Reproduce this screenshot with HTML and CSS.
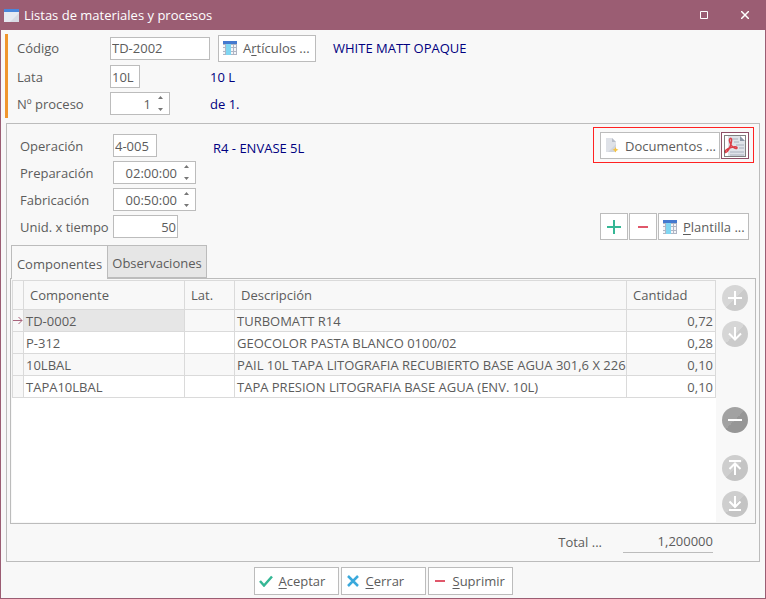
FILE: index.html
```html
<!DOCTYPE html>
<html lang="es">
<head>
<meta charset="utf-8">
<meta name="viewport" content="width=device-width, initial-scale=1">
<title>Listas de materiales y procesos</title>
<link rel="stylesheet" href="styles.css">
</head>
<body>
<svg class="defs" aria-hidden="true">
  <symbol id="grid" viewBox="0 0 14 14">
    <rect width="14" height="14" fill="#b9bfcb"/>
    <path d="M0 3h14v11H0z" fill="#aeb5c4"/>
    <path d="M0 4h2v2H0zM0 7h2v3H0zM0 11h2v2H0zM8 4h2v2H8zM8 7h2v3H8zM8 11h2v2H8zM11 4h2v2h-2zM11 7h2v3h-2zM11 11h2v2h-2z" fill="#f4f5f8"/>
    <path d="M3 3h5v11H3z" fill="#7fd6f2"/>
    <path d="M0 0h14v3H0z" fill="#4479cf"/>
  </symbol>
</svg>
<div class="window">
  <header class="titlebar">
    <svg class="app-icon" viewBox="0 0 15 13" aria-hidden="true"><path d="M0 0h15v13H0z" fill="#e6e9f2"/><path d="M6 13l9-9v9z" fill="#d8dbe5"/><path d="M0 0h15v3H0z" fill="#4a86dc"/></svg>
    <h1>Listas de materiales y procesos</h1>
    <button class="win-btn" aria-label="Maximizar"><svg width="8" height="8"><path d="M.5.5h7v7h-7z" fill="none" stroke="#fff"/></svg></button>
    <button class="win-btn" aria-label="Cerrar ventana"><svg width="8" height="8"><path d="M0 0l8 8M8 0L0 8" stroke="#fff" stroke-width="1.5"/></svg></button>
  </header>

  <main>
    <section class="head">
      <div class="row">
        <label for="codigo">Código</label>
        <input id="codigo" class="w-code" value="TD-2002">
        <button class="btn articles"><svg class="i14" aria-hidden="true"><use href="#grid"/></svg><span>A<u>r</u>tículos ...</span></button>
        <output class="info">WHITE MATT OPAQUE</output>
      </div>
      <div class="row">
        <label for="lata">Lata</label>
        <div class="cell"><input id="lata" class="w-can" value="10L"></div>
        <output class="info">10 L</output>
      </div>
      <div class="row">
        <label for="proceso">Nº proceso</label>
        <div class="cell"><div class="spin w-proc"><input id="proceso" value="1"><svg width="5" height="15" aria-hidden="true"><path d="M0 3l2.500-3L5 3zM0 12h5l-2.500 3z" fill="#777"/></svg></div></div>
        <output class="info">de 1.</output>
      </div>
    </section>

    <section class="panel">
      <div class="operation">
        <div class="fields">
          <div class="row"><label for="operacion">Operación</label><div class="cell"><input id="operacion" class="w-op" value="4-005"></div><output class="info low">R4 - ENVASE 5L</output></div>
          <div class="row"><label for="prep">Preparación</label><div class="spin w-time"><input id="prep" value="02:00:00"><svg width="5" height="15" aria-hidden="true"><path d="M0 3l2.500-3L5 3zM0 12h5l-2.500 3z" fill="#777"/></svg></div></div>
          <div class="row"><label for="fab">Fabricación</label><div class="spin w-time"><input id="fab" value="00:50:00"><svg width="5" height="15" aria-hidden="true"><path d="M0 3l2.500-3L5 3zM0 12h5l-2.500 3z" fill="#777"/></svg></div></div>
          <div class="row"><label for="unid">Unid. x tiempo</label><input id="unid" class="w-unit" value="50"></div>
        </div>
        <div class="tools">
          <div class="highlight">
            <button class="btn docs"><svg width="14" height="15" viewBox="0 0 14 15" aria-hidden="true"><path d="M1 0h6l4 4v10H1z" fill="#dfe2e8"/><path d="M7 0l4 4H7z" fill="#b9bec9"/><path d="M3 14l8-8v8z" fill="#d1d5dd"/><path d="M10.500 9l.9 1.900 2.100.9-2.100.9-.9 1.900-.9-1.900-2.100-.9 2.100-.9z" fill="#f7c33e"/></svg><span>Documentos ...</span></button>
            <button class="btn pdf" aria-label="PDF"><svg width="22" height="22" viewBox="0 0 22 22" aria-hidden="true"><path d="M4 1h12l5 5v15H4z" fill="#dfe3e9"/><path d="M16 1l5 5h-5z" fill="#8c96a6"/><path d="M8 4h6M10 7h5M12 10h8M15 13h5M6 17h14M6 20h14" stroke="#a8b0bd"/><path d="M6 3.500c1.500-1 2 1.500 1.200 4.500C6.300 12 3.500 18 1.500 17.500c-1.500-1.500 2-4 5.500-5 3-1 6.500-1 6 .5-1 1.500-4.500-.5-6.200-3.500C5.500 7 5 4.500 6 3.500z" fill="none" stroke="#dc3e48" stroke-width="1.500"/><path d="M.5.5h21v21H.5z" fill="none" stroke="#000" stroke-dasharray="1 1"/></svg></button>
          </div>
          <div class="toolbar">
            <button class="btn square" aria-label="Añadir"><svg width="14" height="14"><path d="M7 0v14M0 7h14" stroke="#35b795" stroke-width="2"/></svg></button>
            <button class="btn square" aria-label="Quitar"><svg width="10" height="2"><path d="M0 1h10" stroke="#e0576a" stroke-width="2"/></svg></button>
            <button class="btn template"><svg class="i14" aria-hidden="true"><use href="#grid"/></svg><span><u>P</u>lantilla ...</span></button>
          </div>
        </div>
      </div>

      <div class="tabs" role="tablist">
        <button class="tab active" role="tab" aria-selected="true">Componentes</button>
        <button class="tab" role="tab" aria-selected="false">Observaciones</button>
      </div>
      <div class="sheet">
        <div class="table-area">
          <table>
            <colgroup><col class="c-mark"><col class="c-comp"><col class="c-lat"><col><col class="c-qty"></colgroup>
            <thead><tr><th></th><th>Componente</th><th>Lat.</th><th>Descripción</th><th>Cantidad</th></tr></thead>
            <tbody>
              <tr><td class="mark"><svg width="10" height="9" aria-hidden="true"><path d="M0 4.500h9M5.500 1L9 4.500 5.500 8" fill="none" stroke="#a8647c"/></svg></td><td class="selected">TD-0002</td><td></td><td>TURBOMATT R14</td><td>0,72</td></tr>
              <tr><td class="mark"></td><td>P-312</td><td></td><td>GEOCOLOR PASTA BLANCO 0100/02</td><td>0,28</td></tr>
              <tr><td class="mark"></td><td>10LBAL</td><td></td><td>PAIL 10L TAPA LITOGRAFIA RECUBIERTO BASE AGUA 301,6 X 226</td><td>0,10</td></tr>
              <tr><td class="mark"></td><td>TAPA10LBAL</td><td></td><td>TAPA PRESION LITOGRAFIA BASE AGUA (ENV. 10L)</td><td>0,10</td></tr>
            </tbody>
          </table>
        </div>
        <div class="side">
          <button class="round light" aria-label="Añadir línea"><svg viewBox="0 0 26 26"><path d="M13 6v14M6 13h14"/></svg></button>
          <button class="round light" aria-label="Bajar"><svg viewBox="0 0 26 26"><path d="M13 6v13M7 12.500l6 6 6-6"/></svg></button>
          <button class="round dark" aria-label="Eliminar línea"><svg viewBox="0 0 26 26"><path d="M6 13h14"/></svg></button>
          <button class="round" aria-label="Ir al principio"><svg viewBox="0 0 26 26"><path d="M7 6h12M13 20V9M7.500 14L13 8.500l5.500 5.500"/></svg></button>
          <button class="round" aria-label="Ir al final"><svg viewBox="0 0 26 26"><path d="M7 19h12M13 5v11M7.500 10.500L13 16l5.500-5.500"/></svg></button>
        </div>
      </div>
      <div class="total"><label for="total">Total ...</label><input id="total" value="1,200000" readonly></div>
    </section>

    <footer>
      <button class="btn action"><svg width="14" height="12"><path d="M1 6l4 4.500L13 1.500" fill="none" stroke="#35b795" stroke-width="2.500"/></svg><span><u>A</u>ceptar</span></button>
      <button class="btn action"><svg width="14" height="12"><path d="M2 1l10 10M12 1L2 11" stroke="#3aa9dc" stroke-width="2.500"/></svg><span><u>C</u>errar</span></button>
      <button class="btn action"><svg width="14" height="12"><path d="M2 6h10" stroke="#e0576a" stroke-width="2"/></svg><span><u>S</u>uprimir</span></button>
    </footer>
  </main>
</div>
</body>
</html>
```
FILE: styles.css
```css
* { box-sizing: border-box; }
body { margin: 0; font: 13px/18px "Open Sans", "Noto Sans", sans-serif; color: #5c5c5c; }
button, input { font: inherit; color: inherit; }
button { padding: 0; border: 0; background: none; }
svg { display: block; flex: none; }
.defs { position: absolute; width: 0; height: 0; }

.window { min-height: 100vh; display: flex; flex-direction: column; border: 1px solid #9b5d73; border-top: 0; background: #f8f8f8; }
.titlebar { display: flex; align-items: center; height: 30px; padding-left: 3px; background: #9b5d73; color: #fff; }
.app-icon { width: 15px; height: 13px; }
h1 { flex: 1; margin: 0 0 0 5px; font-size: 13px; line-height: 18px; font-weight: 400; }
.win-btn { display: grid; place-items: center; width: 42px; height: 30px; }
.win-btn:last-child { width: 40px; }

main { flex: 1; display: flex; flex-direction: column; padding: 4px 5px 3px; }
.row { display: flex; align-items: center; }
.row label { flex: none; width: 93px; }
input { height: 23px; padding: 0 1px; border: 1px solid #bcbcbc; border-radius: 0; background: #fff; outline: 0; }
.info { color: #000080; }

.head { display: grid; gap: 4px; margin-left: -1px; padding: 0 0 3px 9px; border-left: 3px solid #f0962d; }
.head .row { height: 23px; }
.head .row:first-child { height: 28px; margin-bottom: -1px; }
.head .cell { width: 100px; }
.w-code { width: 100px; }
.w-can { width: 30px; }
.w-proc { width: 60px; }
.w-op { width: 44px; }
.w-time { width: 83px; }
.w-unit { width: 65px; text-align: right; }
.spin { display: flex; align-items: center; height: 23px; padding-right: 6px; border: 1px solid #bcbcbc; background: #fff; }
.spin input { flex: 1; min-width: 0; height: 21px; margin-right: 6px; border: 0; text-align: right; }

.btn { display: flex; align-items: center; height: 27px; border: 1px solid #bcbcbc; background: #fff; white-space: nowrap; }
.btn u { text-underline-offset: 2px; }
.i14 { width: 14px; height: 14px; }
.articles { width: 98px; margin: 0 17px 0 8px; padding-left: 4px; gap: 6px; }

.panel { flex: 1; display: flex; flex-direction: column; margin-top: 5px; border: 1px solid #bcbcbc; }
.operation { display: flex; justify-content: space-between; }
.fields { display: grid; align-content: start; gap: 4px; padding: 10px 0 0 13px; }
.fields .row { height: 23px; }
.fields .cell { width: 100px; }
.fields .low { padding-top: 4px; }
.tools { display: flex; flex-direction: column; justify-content: space-between; padding: 3px 5px 0 0; }
.highlight { display: flex; gap: 1px; padding: 4px 4px 3px 6px; border: 1px solid #f22; }
.docs { width: 120px; padding-left: 4px; gap: 6px; }
.pdf { width: 28px; justify-content: center; border-color: #8d4f66; }
.toolbar { display: flex; gap: 1px; padding-left: 7px; margin-bottom: -2px; }
.square { width: 28px; justify-content: center; }
.template { width: 91px; padding-left: 4px; gap: 6px; }

.tabs { display: flex; align-items: flex-end; margin: 7px 0 0 4px; }
.tab { height: 33px; width: 100px; padding-top: 3px; border: 1px solid #bcbcbc; background: #e6e6e6; }
.tab.active { position: relative; z-index: 1; width: 97px; height: 34px; margin: 0 -1px -1px 0; border-bottom: 0; background: #f8f8f8; }
.sheet { flex: 1; display: flex; margin: 0 3px; padding: 1px; border: 1px solid #bcbcbc; }
.table-area { flex: 1; background: #fff; }
table { width: 100%; table-layout: fixed; border-collapse: collapse; }
.c-mark { width: 11px; }
.c-comp { width: 161px; }
.c-lat { width: 50px; }
.c-qty { width: 89px; }
th, td { padding: 0 2px; border: 1px solid #dadada; text-align: left; font-weight: 400; white-space: nowrap; }
th { height: 29px; padding: 0 6px; background: #f8f8f8; }
td { height: 22px; }
tbody tr:nth-child(odd) td, tbody .mark { background: #f8f8f8; }
tbody tr td.selected { background: #e6e6e6; }
td:last-child { text-align: right; }
td.mark { padding: 0; }
.side { width: 38px; padding: 5px 0 5px 6px; }
.round { display: block; width: 26px; height: 26px; margin-bottom: 10px; border-radius: 50%; background: linear-gradient(135deg, #cecece 50%, #c4c4c4 50%); }
.round.light { background: linear-gradient(135deg, #d6d6d6 50%, #cbcbcb 50%); }
.round.dark { margin: 60px 0 22px; background: linear-gradient(135deg, #a2a2a2 50%, #969696 50%); }
.round svg { width: 26px; fill: none; stroke: #fff; stroke-width: 2; }
.round:last-child { margin-bottom: 0; }
.total { display: flex; align-items: center; justify-content: flex-end; height: 37px; padding: 0 46px 2px 0; }
.total input { width: 90px; margin-left: 21px; padding: 0; border-width: 0 0 1px; background: none; text-align: right; }

footer { display: flex; justify-content: center; gap: 2px; padding-top: 5px; }
.action { width: 85px; height: 28px; padding-left: 4px; gap: 6px; }
```
